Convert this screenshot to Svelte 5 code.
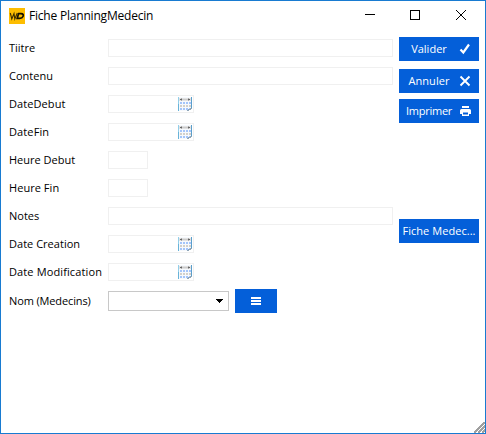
<script>
  const rows = [
    { label: 'Tiitre', kind: 'wide', ls: 0 },
    { label: 'Contenu', kind: 'wide', ls: 0 },
    { label: 'DateDebut', kind: 'date', ls: 0.08 },
    { label: 'DateFin', kind: 'date', ls: 0.12 },
    { label: 'Heure Debut', kind: 'time', ls: 0 },
    { label: 'Heure Fin', kind: 'time', ls: 0.05 },
    { label: 'Notes', kind: 'wide', ls: 0 },
    { label: 'Date Creation', kind: 'date', ls: 0.02 },
    { label: 'Date Modification', kind: 'date', ls: 0.12 }
  ];
  const dots = [0, 1, 2].flatMap((r) => [0, 1, 2, 3].map((c) => ({ r, c })));
</script>

<div class="window">
  <header>
    <svg class="logo" width="16" height="16" viewBox="0 0 16 16">
      <rect width="16" height="16" fill="#fdbd00" />
      <path d="M1.3 5L2.8 11L5 5.5L5.8 11L8.3 5" fill="none" stroke="#3b2c00" stroke-width="1.1" />
      <path d="M9.6 5.6H12C14.3 5.6 14.6 7 14 8.5C13.4 10 12.4 10.4 10.6 10.4H8.2Z" fill="none" stroke="#171200" stroke-width="1.7" />
    </svg>
    <h1>Fiche PlanningMedecin</h1>
    <div class="controls">
      <svg width="10" height="10" shape-rendering="crispEdges"><path d="M0 4.5H10" stroke="#000" /></svg>
      <svg width="10" height="10" shape-rendering="crispEdges"><rect x=".5" y=".5" width="9" height="9" fill="none" stroke="#000" /></svg>
      <svg width="10" height="10"><path d="M0 0L10 10M10 0L0 10" stroke="#000" /></svg>
    </div>
  </header>

  <main>
    <section class="form">
      {#each rows as row}
        <div class="row">
          <span class="label" style="letter-spacing: {row.ls}px">{row.label}</span>
          <div class="field {row.kind}">
            {#if row.kind === 'date'}
              <svg width="14" height="14" shape-rendering="crispEdges">
                <rect width="14" height="14" fill="#f6f9fd" />
                <rect width="1" height="14" fill="#93cfea" />
                <rect y="7" width="1" height="7" fill="#69b3d8" />
                <rect x="13" width="1" height="12" fill="#5b9fcb" />
                <rect x="1" y="1" width="12" height="3" fill="#e2e2e2" />
                <rect x="4" y="2" width="6" height="1" fill="#cccccc" />
                <rect x="3" y="1" width="1" height="3" fill="#aaa" />
                <rect x="10" y="1" width="1" height="3" fill="#aaa" />
                <rect x="2" y="2" width="2" height="1" fill="#666" />
                <rect x="10" y="2" width="2" height="1" fill="#666" />
                {#each dots as d}
                  <rect x={2 + d.c * 3} y={5 + d.r * 3} width="2" height="2" fill={d.r === 1 ? '#d2d0cb' : '#a4c5fa'} />
                {/each}
                <path d="M9 14V13H10V12H12V11H14V12H13V13H11V14Z" fill="#8fa6b8" />
                <path d="M14 12V14H11V13H13V12Z" fill="#fff" />
              </svg>
            {/if}
          </div>
        </div>
      {/each}
      <div class="row last">
        <span class="label nom">Nom (Medecins)</span>
        <div class="combo">
          <svg width="7" height="4" shape-rendering="crispEdges"><path d="M0 0H7V1H6V2H5V3H4V4H3V3H2V2H1V1H0Z" /></svg>
        </div>
        <button class="menu" aria-label="Menu">
          <svg width="10" height="8" shape-rendering="crispEdges"><path d="M0 0H10V2H0ZM0 3H10V5H0ZM0 6H10V8H0Z" fill="#fff" /></svg>
        </button>
      </div>
    </section>

    <aside>
      <button class="action first"><span>Valider</span>
        <svg width="12" height="12"><path d="M1.5 6.5L4.3 9.5L10 1.5" fill="none" stroke="#fff" stroke-width="2.2" /></svg>
      </button>
      <button class="action annuler"><span>Annuler</span>
        <svg width="12" height="12"><path d="M1.5 1.5L10.5 10.5M10.5 1.5L1.5 10.5" fill="none" stroke="#fff" stroke-width="1.9" /></svg>
      </button>
      <button class="action imprimer"><span>Imprimer</span>
        <svg width="12" height="12">
          <path d="M3 1H10V3H3Z" fill="#fff" />
          <path d="M2.5 4H10.5Q12 4 12 5.5V9H10V11H3V9H1V5.5Q1 4 2.5 4Z" fill="#fff" />
          <path d="M4 7.5H9V9.5H4Z" fill="#045fd9" />
        </svg>
      </button>
      <button class="action fiche"><span>Fiche Medec...</span></button>
    </aside>
  </main>

  <svg class="grip" width="11" height="11" shape-rendering="crispEdges">
    <path d="M0 11L11 0M4 11L11 4M8 11L11 8" stroke="#a0a0a0" stroke-width="1.5" />
  </svg>
</div>

<style>
  .window {
    position: relative;
    box-sizing: border-box;
    width: 486px;
    height: 434px;
    border: 1px solid #187bd1;
    background: #fff;
    overflow: hidden;
    font-family: 'Open Sans', 'Noto Sans', sans-serif;
    font-size: 11px;
    color: #000;
  }
  svg { display: block; flex: none; }
  header {
    display: flex;
    align-items: center;
    height: 30px;
    padding-left: 8px;
  }
  h1 {
    margin: 0 0 0 4px;
    font-size: 12px;
    font-weight: 400;
    line-height: 16px;
    letter-spacing: -0.2px;
    white-space: nowrap;
  }
  .controls {
    display: flex;
    gap: 36px;
    margin-left: auto;
    padding: 0 19px 2px 0;
  }
  .controls svg:first-child { margin-right: -1px; }
  main {
    display: flex;
    justify-content: space-between;
    padding: 6px 6px 0 8px;
  }
  .form { padding-top: 2px; }
  .row {
    display: flex;
    align-items: center;
    height: 18px;
    margin-bottom: 10px;
  }
  .label {
    width: 99px;
    flex: none;
    line-height: 18px;
    white-space: nowrap;
  }
  .nom { letter-spacing: -0.13px; }
  .field {
    box-sizing: border-box;
    height: 18px;
    border: 1px solid #f0f0f0;
    display: flex;
    align-items: center;
    justify-content: flex-end;
    padding-right: 1px;
  }
  .wide { width: 285px; }
  .date { width: 86px; }
  .time { width: 40px; }
  .last { height: 20px; }
  .combo {
    box-sizing: border-box;
    display: flex;
    align-items: center;
    justify-content: flex-end;
    width: 121px;
    height: 20px;
    padding-right: 5px;
    border: 1px solid #c8c8c8;
  }
  button {
    display: flex;
    align-items: center;
    box-sizing: border-box;
    height: 24px;
    padding: 0;
    border: 0;
    background: #045fd9;
    color: #fff;
    font: inherit;
    white-space: nowrap;
  }
  .menu {
    justify-content: center;
    width: 42px;
    margin-left: 6px;
  }
  aside {
    display: flex;
    flex-direction: column;
    gap: 6px;
  }
  .action {
    width: 80px;
    padding-right: 8px;
  }
  .action span {
    flex: 1;
    padding-bottom: 2px;
    text-align: center;
  }
  .first { margin-bottom: 2px; }
  .annuler { letter-spacing: 0.05px; }
  .imprimer { letter-spacing: -0.25px; }
  .fiche {
    margin-top: 90px;
    padding: 0;
    letter-spacing: 0.05px;
  }
  .grip {
    position: absolute;
    right: 0;
    bottom: 0;
  }
</style>
